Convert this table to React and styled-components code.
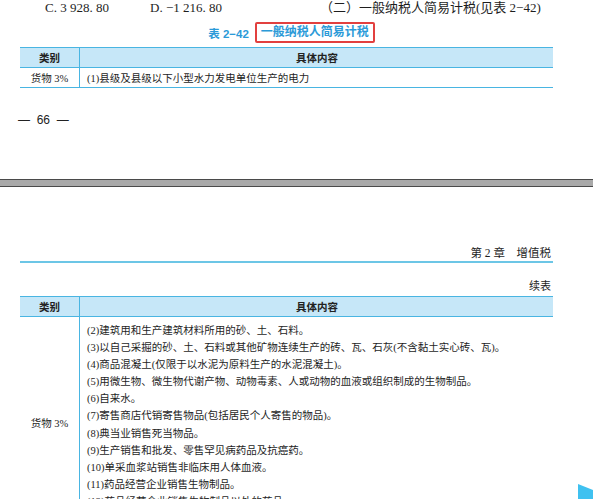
import React from "react";
import styled, { createGlobalStyle } from "styled-components";

const Global = createGlobalStyle`
  html, body { margin: 0; padding: 0; background: #ffffff; }
  body {
    width: 593px; height: 499px; overflow: hidden; position: relative;
    font-family: "Liberation Serif", "Noto Sans CJK SC", serif;
    color: #1e1e1e;
  }
`;

const SERIF = `"Liberation Serif", "Noto Sans CJK SC", serif`;
const SANS = `"Liberation Sans", "Noto Sans CJK SC", sans-serif`;
const BLUE_LINE = "#49b5e2";

const Page = styled.div`
  padding: 0 40px 0 20px;
  width: 533px;
`;

const FirstPage = styled(Page)`
  height: 179px;
`;

const Options = styled.div`
  display: flex;
  height: 15px;
  line-height: 15px;
  font-size: 13px;
  padding-left: 25px;
`;

const Option = styled.span`
  width: ${(p) => p.$w}px;
  flex: none;
  white-space: nowrap;
`;

const Caption = styled.div`
  display: flex;
  justify-content: center;
  align-items: center;
  gap: 6px;
  margin-top: 7px;
  height: 21px;
  padding-left: 10px;
  font-family: ${SANS};
  font-weight: 700;
  font-size: 11.5px;
  color: #2b9ad8;
`;

const Highlight = styled.span`
  border: 2px solid #e2403f;
  border-radius: 2px;
  padding: 0 4px;
  height: 17px;
  line-height: 17px;
  font-size: 12px;
`;

const Table = styled.table`
  width: 533px;
  border-collapse: collapse;
  margin-top: ${(p) => p.$mt}px;
  font-size: 10.5px;
  font-family: ${SERIF};
`;

const Th = styled.th`
  background: #c6e7f8;
  border-top: 1.5px solid ${BLUE_LINE};
  border-bottom: 1.5px solid ${BLUE_LINE};
  border-left: ${(p) => (p.$divider ? `1.5px solid ${BLUE_LINE}` : "none")};
  height: 19px;
  padding: 0;
  font-family: ${SANS};
  font-weight: 700;
  font-size: 10.5px;
  color: #222;
  text-align: ${(p) => (p.$left ? "left" : "center")};
  padding-left: ${(p) => (p.$left ? "216px" : "0")};
  width: ${(p) => (p.$w ? `${p.$w}px` : "auto")};
`;

const Td = styled.td`
  border-bottom: ${(p) => (p.$open ? "none" : `1.5px solid ${BLUE_LINE}`)};
  border-left: ${(p) => (p.$divider ? `1.5px solid ${BLUE_LINE}` : "none")};
  padding: ${(p) => (p.$list ? "5px 0 0 7px" : "0 0 0 7px")};
  text-align: ${(p) => (p.$center ? "center" : "left")};
  padding-left: ${(p) => (p.$center ? "0" : "7px")};
  height: ${(p) => (p.$list ? "auto" : "19px")};
  vertical-align: middle;
  white-space: nowrap;
`;

const Line = styled.div`
  height: 17.1px;
  line-height: 17.1px;
`;

const PageNo = styled.div`
  margin-top: 25px;
  margin-left: -2px;
  font-family: ${SANS};
  font-size: 12px;
  color: #222;
  white-space: pre;
`;

const Separator = styled.div`
  height: 6px;
  background: #a9a9a9;
  border-top: 1px solid #4a4a4a;
  border-bottom: 1px solid #4a4a4a;
`;

const RunningHead = styled.div`
  margin-top: 59px;
  height: 14px;
  line-height: 14px;
  text-align: right;
  font-size: 11.5px;
  padding-right: 2px;
  padding-bottom: 1px;
  border-bottom: 2px solid #6cc6e6;
  white-space: pre;
`;

const Continued = styled.div`
  margin-top: 16px;
  height: 14px;
  line-height: 14px;
  text-align: right;
  font-size: 11px;
  padding-right: 2px;
`;

const Corner = styled.svg`
  position: absolute;
  right: 0;
  bottom: 0;
  width: 15px;
  height: 15px;
`;

const items = [
  "(2)建筑用和生产建筑材料所用的砂、土、石料。",
  "(3)以自己采掘的砂、土、石料或其他矿物连续生产的砖、瓦、石灰(不含黏土实心砖、瓦)。",
  "(4)商品混凝土(仅限于以水泥为原料生产的水泥混凝土)。",
  "(5)用微生物、微生物代谢产物、动物毒素、人或动物的血液或组织制成的生物制品。",
  "(6)自来水。",
  "(7)寄售商店代销寄售物品(包括居民个人寄售的物品)。",
  "(8)典当业销售死当物品。",
  "(9)生产销售和批发、零售罕见病药品及抗癌药。",
  "(10)单采血浆站销售非临床用人体血液。",
  "(11)药品经营企业销售生物制品。",
  "(12)药品经营企业销售生物制品以外的药品。",
  "(13)应予退还的增值税额。",
];

function Header() {
  return (
    <thead>
      <tr>
        <Th $w={59}>类别</Th>
        <Th $divider $left>具体内容</Th>
      </tr>
    </thead>
  );
}

export default function App() {
  return (
    <>
      <Global />
      <FirstPage>
        <Options>
          <Option $w={105}>C. 3 928. 80</Option>
          <Option $w={170}>D. −1 216. 80</Option>
          <Option $w={240}>（二）一般纳税人简易计税(见表 2−42)</Option>
        </Options>
        <Caption>
          <span>表 2−42</span>
          <Highlight>一般纳税人简易计税</Highlight>
        </Caption>
        <Table $mt={4}>
          <Header />
          <tbody>
            <tr>
              <Td $center>货物 3%</Td>
              <Td $divider>(1)县级及县级以下小型水力发电单位生产的电力</Td>
            </tr>
          </tbody>
        </Table>
        <PageNo>{"—  66  —"}</PageNo>
      </FirstPage>
      <Separator />
      <Page>
        <RunningHead>{"第 2 章    增值税"}</RunningHead>
        <Continued>续表</Continued>
        <Table $mt={3}>
          <Header />
          <tbody>
            <tr>
              <Td $center $open>货物 3%</Td>
              <Td $divider $list $open>
                {items.map((t) => (
                  <Line key={t}>{t}</Line>
                ))}
              </Td>
            </tr>
          </tbody>
        </Table>
      </Page>
      <Corner viewBox="0 0 15 15">
        <polygon points="0,0 15,6 15,15 0,15" fill="#3fc1f0" />
      </Corner>
    </>
  );
}
